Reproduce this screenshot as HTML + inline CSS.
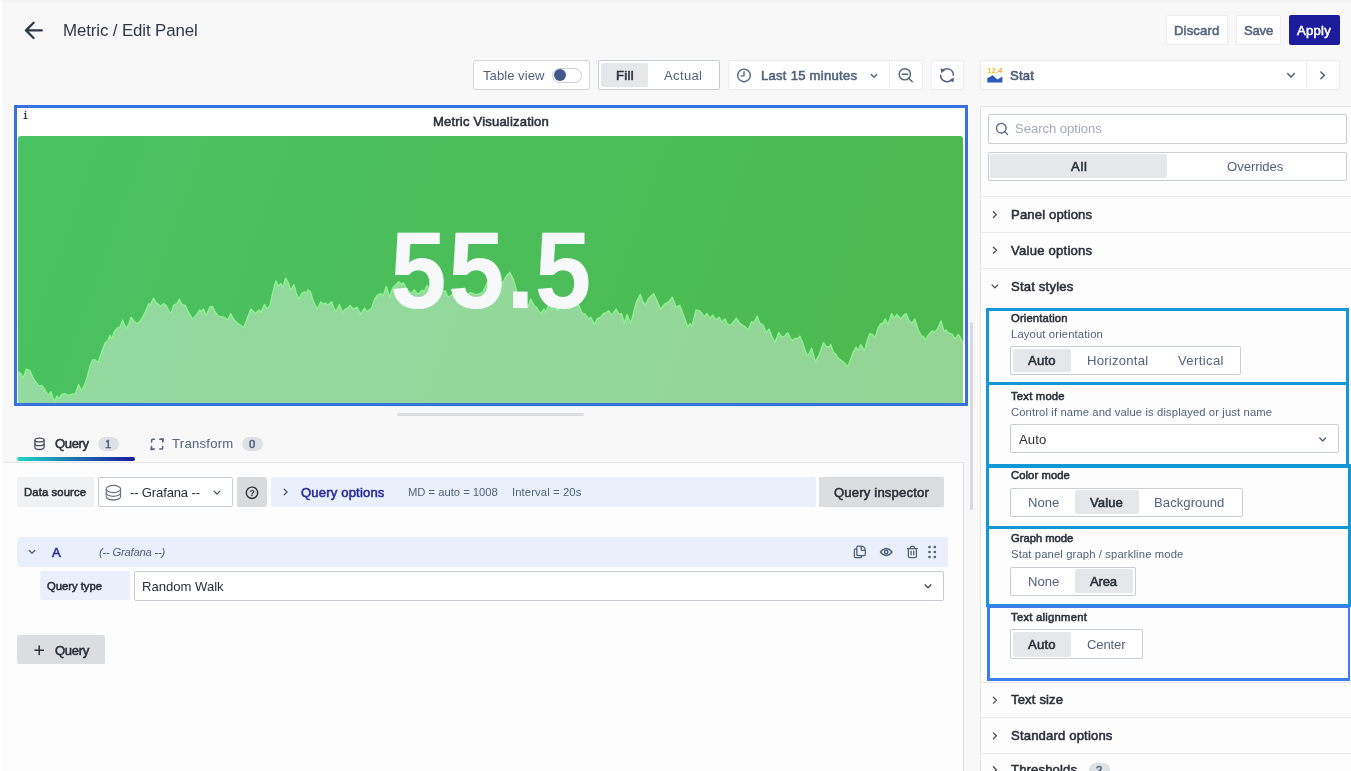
<!DOCTYPE html>
<html lang="en"><head><meta charset="utf-8"><title>Metric / Edit Panel</title>
<style>

html,body{margin:0;padding:0;}
body{width:1351px;height:771px;overflow:hidden;position:relative;background:#f8f8f8;font-family:"Liberation Sans",sans-serif;}
.b{position:absolute;box-sizing:border-box;}
.t{position:absolute;white-space:nowrap;will-change:transform;line-height:20px;height:20px;font-family:"Liberation Sans",sans-serif;}
svg{position:absolute;left:0;top:0;overflow:visible;}

</style></head><body>
<div class="b" style="left:0px;top:0px;width:1351.00px;height:1.50px;background:#f3f3f4;"></div>
<div class="b" style="left:0px;top:0px;width:1.60px;height:771.00px;background:#ffffff;"></div>
<div class="b" style="left:2px;top:461.5px;width:962.00px;height:318.50px;background:#fdfdfd;border-top:1px solid #e4e6ea;border-right:1px solid #e4e6ea;"></div>
<div class="b" style="left:979.5px;top:105.5px;width:380.50px;height:674.50px;background:#fdfdfd;border:1px solid #e4e6ea;border-radius:2px;"></div>
<div class="b" style="left:1166px;top:15px;width:62.00px;height:30.00px;background:#ffffff;border:1px solid #eceef1;border-radius:2px;"></div>
<div class="b" style="left:1236px;top:15px;width:45.00px;height:30.00px;background:#ffffff;border:1px solid #eceef1;border-radius:2px;"></div>
<div class="b" style="left:1289px;top:15px;width:51.00px;height:30.00px;background:#1c1c9c;border-radius:2px;"></div>
<div class="b" style="left:473px;top:60px;width:117.00px;height:30.00px;background:#ffffff;border:1px solid #d2d6dc;border-radius:2px;"></div>
<div class="b" style="left:552px;top:68px;width:30.00px;height:15.00px;background:#ffffff;border:1px solid #c8ccd3;border-radius:8px;"></div>
<div class="b" style="left:554.4px;top:69.4px;width:12.00px;height:12.00px;background:#40588a;border-radius:6px;"></div>
<div class="b" style="left:598px;top:60px;width:122.00px;height:30.00px;background:#ffffff;border:1px solid #c8ccd3;border-radius:2px;"></div>
<div class="b" style="left:600.6px;top:63px;width:47.80px;height:24.40px;background:#e6e7ea;border-radius:2px;"></div>
<div class="b" style="left:727.5px;top:60px;width:195.00px;height:30.00px;background:#ffffff;border:1px solid #e9ebee;border-radius:2px;"></div>
<div class="b" style="left:889px;top:60px;width:1.00px;height:30.00px;background:#e9ebee;"></div>
<div class="b" style="left:930.5px;top:60px;width:33.00px;height:30.00px;background:#ffffff;border:1px solid #e9ebee;border-radius:2px;"></div>
<div class="b" style="left:979.5px;top:60px;width:360.00px;height:30.00px;background:#ffffff;border:1px solid #e9ebee;border-radius:2px;"></div>
<div class="b" style="left:1306px;top:60px;width:1.00px;height:30.00px;background:#e9ebee;"></div>
<div class="b" style="left:14px;top:105px;width:954.00px;height:301.00px;background:#ffffff;border:3px solid #3871dc;"></div>
<div class="b" style="left:397px;top:413px;width:187.00px;height:3.00px;background:#dcdde0;border-radius:1.5px;"></div>
<div class="b" style="left:970px;top:322px;width:3.00px;height:188.00px;background:#d9dadd;border-radius:1.5px;"></div>
<div class="b" style="left:17px;top:457px;width:117.50px;height:4.00px;background:linear-gradient(90deg,#1fd6c4 0%,#1d6fb0 50%,#1a1a9a 100%);border-radius:2px;"></div>
<div class="b" style="left:98px;top:436.6px;width:21.40px;height:14.40px;background:#dde0e5;border-radius:8px;"></div>
<div class="b" style="left:242px;top:436.6px;width:21.00px;height:14.40px;background:#dde0e5;border-radius:8px;"></div>
<div class="b" style="left:17px;top:477px;width:77.00px;height:29.60px;background:#f0f1f3;border-radius:2px;"></div>
<div class="b" style="left:98px;top:476.5px;width:135.00px;height:30.00px;background:#ffffff;border:1px solid #c8ccd3;border-radius:2px;"></div>
<div class="b" style="left:237.4px;top:477px;width:29.20px;height:29.60px;background:#d9dadd;border-radius:2px;"></div>
<div class="b" style="left:271px;top:477px;width:544.50px;height:29.60px;background:#e9effb;border-radius:2px;"></div>
<div class="b" style="left:819.3px;top:477px;width:125.00px;height:29.70px;background:#dcdde0;border-radius:2px;"></div>
<div class="b" style="left:17px;top:537.2px;width:931.00px;height:29.60px;background:#e9effb;border-radius:2px;"></div>
<div class="b" style="left:39.8px;top:571.3px;width:89.90px;height:29.00px;background:#e9effb;border-radius:2px;"></div>
<div class="b" style="left:133.8px;top:571.3px;width:810.20px;height:29.30px;background:#ffffff;border:1px solid #c8ccd3;border-radius:2px;"></div>
<div class="b" style="left:17px;top:635.2px;width:88.40px;height:29.00px;background:#dcdde0;border-radius:2px;"></div>
<div class="b" style="left:987.5px;top:114px;width:359.00px;height:29.50px;background:#ffffff;border:1px solid #c8ccd3;border-radius:2px;"></div>
<div class="b" style="left:987.5px;top:151.7px;width:359.00px;height:29.30px;background:#ffffff;border:1px solid #c8ccd3;border-radius:2px;"></div>
<div class="b" style="left:990px;top:154.2px;width:176.50px;height:24.30px;background:#e6e7ea;border-radius:2px;"></div>
<div class="b" style="left:980.5px;top:195.9px;width:370.50px;height:1.00px;background:#e9eaed;"></div>
<div class="b" style="left:980.5px;top:232.0px;width:370.50px;height:1.00px;background:#e9eaed;"></div>
<div class="b" style="left:980.5px;top:267.6px;width:370.50px;height:1.00px;background:#e9eaed;"></div>
<div class="b" style="left:980.5px;top:682.4px;width:370.50px;height:1.00px;background:#e9eaed;"></div>
<div class="b" style="left:980.5px;top:717.1px;width:370.50px;height:1.00px;background:#e9eaed;"></div>
<div class="b" style="left:980.5px;top:752.7px;width:370.50px;height:1.00px;background:#e9eaed;"></div>
<div class="b" style="left:1010px;top:346px;width:231.00px;height:29.00px;background:#ffffff;border:1px solid #c8ccd3;border-radius:2px;"></div>
<div class="b" style="left:1013px;top:348.6px;width:58.00px;height:23.40px;background:#e6e7ea;border-radius:2px;"></div>
<div class="b" style="left:1010px;top:424.3px;width:328.60px;height:29.00px;background:#ffffff;border:1px solid #c8ccd3;border-radius:2px;"></div>
<div class="b" style="left:1010px;top:487.7px;width:233.00px;height:29.00px;background:#ffffff;border:1px solid #c8ccd3;border-radius:2px;"></div>
<div class="b" style="left:1075.2px;top:490.3px;width:63.40px;height:23.70px;background:#e6e7ea;border-radius:2px;"></div>
<div class="b" style="left:1010px;top:566.7px;width:125.70px;height:29.00px;background:#ffffff;border:1px solid #c8ccd3;border-radius:2px;"></div>
<div class="b" style="left:1075.2px;top:569.3px;width:57.60px;height:23.70px;background:#e6e7ea;border-radius:2px;"></div>
<div class="b" style="left:1010px;top:629.3px;width:133.00px;height:30.00px;background:#ffffff;border:1px solid #c8ccd3;border-radius:2px;"></div>
<div class="b" style="left:1012.6px;top:631.6px;width:58.40px;height:25.20px;background:#e6e7ea;border-radius:2px;"></div>
<div class="b" style="left:1088.5px;top:762.7px;width:21.50px;height:14.30px;background:#dde0e5;border-radius:8px;"></div>
<div class="b" style="left:986px;top:308px;width:363.00px;height:77.00px;background:transparent;border:3px solid #1198d5;"></div>
<div class="b" style="left:986px;top:382px;width:363.00px;height:85.50px;background:transparent;border:3px solid #1198d5;"></div>
<div class="b" style="left:986px;top:464.3px;width:364.50px;height:65.20px;background:transparent;border:3.3px solid #1198d5;"></div>
<div class="b" style="left:986px;top:526px;width:364.50px;height:81.00px;background:transparent;border:3.3px solid #1198d5;"></div>
<div class="b" style="left:987px;top:604.5px;width:362.70px;height:76.30px;background:transparent;border-style:solid;border-color:#3b7ded;border-width:3px 2px 3px 3px;"></div>
<div class="b" style="left:18px;top:136px;width:945px;height:267px;border-radius:3px 3px 0 0;overflow:hidden;background:linear-gradient(110deg,#4ac263 0%,#4db94f 100%);">
<svg width="945" height="267" viewBox="0 0 945 267"><path d="M0.0,235.7 L2.9,237.5 L5.1,242.0 L8.3,233.0 L12.0,234.8 L15.6,243.0 L21.0,250.2 L23.8,249.3 L27.4,254.7 L30.1,259.3 L32.9,255.6 L36.5,265.6 L38.8,260.2 L40.7,262.9 L43.7,258.4 L46.5,257.5 L50.1,259.3 L53.7,258.4 L57.4,257.5 L60.6,248.4 L63.2,254.7 L66.1,250.2 L69.2,241.1 L71.9,230.2 L74.6,223.9 L77.3,223.9 L80.1,226.6 L83.7,215.7 L87.3,206.6 L90.0,203.9 L91.9,199.4 L93.7,203.0 L96.4,195.7 L99.1,192.1 L101.8,191.2 L104.6,183.9 L108.2,193.0 L110.9,187.6 L113.3,181.2 L116.4,185.7 L120.0,187.6 L123.6,183.0 L127.3,175.8 L130.9,167.6 L132.7,168.5 L135.4,162.1 L138.2,166.7 L142.7,170.3 L145.4,167.6 L148.1,169.4 L150.9,174.8 L153.2,177.6 L155.4,169.4 L159.0,167.6 L161.4,163.0 L163.6,168.5 L167.2,169.4 L170.8,176.7 L174.5,183.0 L178.1,179.4 L181.7,173.9 L183.5,175.8 L185.4,173.0 L188.4,179.4 L191.7,171.2 L194.4,170.3 L197.2,175.8 L200.8,180.3 L206.2,181.2 L209.9,183.9 L212.6,177.6 L216.2,183.9 L220.8,188.5 L222.0,188.4 L225.6,192.0 L229.3,182.0 L232.9,173.0 L237.4,177.5 L241.0,173.9 L242.9,176.6 L246.5,168.4 L249.2,173.0 L252.0,169.4 L254.7,156.6 L257.9,144.8 L260.5,150.3 L262.8,147.6 L264.7,151.2 L267.7,142.1 L270.6,147.6 L272.8,153.9 L275.9,148.5 L278.3,157.5 L281.0,163.0 L283.7,157.5 L286.4,155.7 L288.3,157.5 L290.1,153.9 L292.4,155.7 L294.6,163.0 L297.3,169.4 L299.2,173.0 L302.8,165.7 L305.5,168.4 L307.3,166.6 L309.5,169.4 L313.7,165.7 L315.5,171.2 L317.9,175.7 L321.5,168.4 L324.6,176.6 L327.3,173.0 L330.0,172.1 L331.8,169.4 L335.5,173.0 L339.1,171.2 L342.7,178.4 L346.4,172.1 L349.1,175.7 L353.6,172.1 L356.3,163.9 L359.1,159.4 L362.7,157.6 L365.4,159.4 L368.2,150.3 L371.8,161.2 L374.5,152.1 L378.1,148.5 L380.9,145.8 L383.6,148.5 L385.4,146.7 L388.1,152.1 L392.7,157.6 L396.3,153.9 L399.9,158.5 L404.5,153.9 L406.3,155.7 L409.0,149.4 L411.7,153.9 L415.0,157.0 L418.0,153.0 L421.0,158.0 L424.0,155.0 L427.2,154.8 L429.9,161.2 L434.4,158.5 L439.9,156.6 L443.0,159.0 L446.0,155.0 L449.0,158.0 L452.6,156.6 L458.0,158.5 L459.3,158.4 L464.7,156.6 L469.2,146.6 L472.0,150.0 L475.0,147.0 L478.0,152.0 L482.9,149.4 L488.3,140.3 L491.9,136.3 L495.6,143.9 L499.2,156.6 L502.0,160.0 L506.5,167.5 L510.1,170.2 L512.8,163.0 L516.5,170.2 L518.3,171.1 L522.8,177.5 L526.1,173.0 L527.9,176.6 L531.0,167.5 L534.6,173.0 L539.1,173.9 L542.8,171.1 L546.0,174.0 L549.0,170.0 L552.0,173.0 L556.0,168.0 L560.9,169.3 L563.7,176.6 L567.3,178.4 L570.9,182.9 L572.7,181.1 L576.4,188.4 L579.1,182.9 L582.7,181.1 L585.4,177.5 L588.2,176.6 L590.9,174.8 L593.6,179.3 L598.2,173.0 L600.9,178.4 L603.6,177.5 L606.3,187.5 L609.0,178.4 L612.7,187.5 L615.4,177.5 L618.1,166.6 L622.3,158.4 L624.5,164.8 L627.2,169.3 L630.8,162.1 L635.7,157.5 L639.0,164.8 L642.6,173.0 L646.3,168.4 L650.8,165.7 L654.4,161.2 L658.1,171.1 L661.7,169.3 L665.3,178.4 L669.9,191.1 L672.0,187.5 L673.9,190.2 L678.0,173.9 L681.7,174.8 L686.2,180.2 L688.9,177.5 L692.0,182.0 L695.0,179.0 L698.0,184.0 L701.0,181.0 L704.0,186.0 L707.0,183.0 L709.5,188.0 L712.0,189.4 L714.7,186.7 L718.4,182.1 L722.0,187.6 L726.5,190.3 L730.2,193.9 L733.4,185.7 L735.6,186.7 L739.2,180.3 L742.0,187.6 L744.7,188.5 L748.3,196.6 L751.0,193.0 L753.8,200.3 L757.0,206.6 L760.7,196.6 L763.7,201.2 L766.5,200.3 L769.7,196.6 L772.8,203.0 L774.6,204.8 L777.4,202.1 L779.2,203.0 L781.9,200.3 L784.6,206.6 L787.3,214.8 L789.7,220.2 L793.7,212.1 L797.3,225.7 L801.0,219.3 L805.5,206.6 L808.2,210.3 L810.9,211.2 L812.8,208.4 L815.5,216.6 L817.3,217.5 L820.0,222.1 L823.7,224.8 L827.3,227.5 L829.6,231.1 L832.7,223.0 L835.5,215.7 L838.2,211.2 L840.0,214.8 L842.7,208.4 L846.4,214.8 L849.1,204.8 L851.8,197.5 L854.5,198.4 L856.9,202.1 L860.0,192.1 L862.7,187.6 L864.5,187.6 L867.2,183.0 L870.0,188.5 L873.6,177.6 L876.3,182.1 L879.0,178.5 L882.7,183.0 L885.4,179.4 L888.1,177.6 L890.8,183.9 L893.6,187.6 L896.8,183.0 L899.9,193.0 L903.5,200.3 L905.4,200.3 L907.2,203.9 L910.8,198.4 L914.4,194.8 L916.2,196.6 L919.9,192.1 L923.0,184.8 L926.2,195.7 L928.0,193.9 L929.9,196.6 L934.4,198.4 L937.1,203.0 L940.4,198.4 L942.6,202.1 L945.0,207.5 L945,267 L0,267 Z" fill="rgba(255,255,255,0.4)" stroke="none"/><path d="M0.0,235.7 L2.9,237.5 L5.1,242.0 L8.3,233.0 L12.0,234.8 L15.6,243.0 L21.0,250.2 L23.8,249.3 L27.4,254.7 L30.1,259.3 L32.9,255.6 L36.5,265.6 L38.8,260.2 L40.7,262.9 L43.7,258.4 L46.5,257.5 L50.1,259.3 L53.7,258.4 L57.4,257.5 L60.6,248.4 L63.2,254.7 L66.1,250.2 L69.2,241.1 L71.9,230.2 L74.6,223.9 L77.3,223.9 L80.1,226.6 L83.7,215.7 L87.3,206.6 L90.0,203.9 L91.9,199.4 L93.7,203.0 L96.4,195.7 L99.1,192.1 L101.8,191.2 L104.6,183.9 L108.2,193.0 L110.9,187.6 L113.3,181.2 L116.4,185.7 L120.0,187.6 L123.6,183.0 L127.3,175.8 L130.9,167.6 L132.7,168.5 L135.4,162.1 L138.2,166.7 L142.7,170.3 L145.4,167.6 L148.1,169.4 L150.9,174.8 L153.2,177.6 L155.4,169.4 L159.0,167.6 L161.4,163.0 L163.6,168.5 L167.2,169.4 L170.8,176.7 L174.5,183.0 L178.1,179.4 L181.7,173.9 L183.5,175.8 L185.4,173.0 L188.4,179.4 L191.7,171.2 L194.4,170.3 L197.2,175.8 L200.8,180.3 L206.2,181.2 L209.9,183.9 L212.6,177.6 L216.2,183.9 L220.8,188.5 L222.0,188.4 L225.6,192.0 L229.3,182.0 L232.9,173.0 L237.4,177.5 L241.0,173.9 L242.9,176.6 L246.5,168.4 L249.2,173.0 L252.0,169.4 L254.7,156.6 L257.9,144.8 L260.5,150.3 L262.8,147.6 L264.7,151.2 L267.7,142.1 L270.6,147.6 L272.8,153.9 L275.9,148.5 L278.3,157.5 L281.0,163.0 L283.7,157.5 L286.4,155.7 L288.3,157.5 L290.1,153.9 L292.4,155.7 L294.6,163.0 L297.3,169.4 L299.2,173.0 L302.8,165.7 L305.5,168.4 L307.3,166.6 L309.5,169.4 L313.7,165.7 L315.5,171.2 L317.9,175.7 L321.5,168.4 L324.6,176.6 L327.3,173.0 L330.0,172.1 L331.8,169.4 L335.5,173.0 L339.1,171.2 L342.7,178.4 L346.4,172.1 L349.1,175.7 L353.6,172.1 L356.3,163.9 L359.1,159.4 L362.7,157.6 L365.4,159.4 L368.2,150.3 L371.8,161.2 L374.5,152.1 L378.1,148.5 L380.9,145.8 L383.6,148.5 L385.4,146.7 L388.1,152.1 L392.7,157.6 L396.3,153.9 L399.9,158.5 L404.5,153.9 L406.3,155.7 L409.0,149.4 L411.7,153.9 L415.0,157.0 L418.0,153.0 L421.0,158.0 L424.0,155.0 L427.2,154.8 L429.9,161.2 L434.4,158.5 L439.9,156.6 L443.0,159.0 L446.0,155.0 L449.0,158.0 L452.6,156.6 L458.0,158.5 L459.3,158.4 L464.7,156.6 L469.2,146.6 L472.0,150.0 L475.0,147.0 L478.0,152.0 L482.9,149.4 L488.3,140.3 L491.9,136.3 L495.6,143.9 L499.2,156.6 L502.0,160.0 L506.5,167.5 L510.1,170.2 L512.8,163.0 L516.5,170.2 L518.3,171.1 L522.8,177.5 L526.1,173.0 L527.9,176.6 L531.0,167.5 L534.6,173.0 L539.1,173.9 L542.8,171.1 L546.0,174.0 L549.0,170.0 L552.0,173.0 L556.0,168.0 L560.9,169.3 L563.7,176.6 L567.3,178.4 L570.9,182.9 L572.7,181.1 L576.4,188.4 L579.1,182.9 L582.7,181.1 L585.4,177.5 L588.2,176.6 L590.9,174.8 L593.6,179.3 L598.2,173.0 L600.9,178.4 L603.6,177.5 L606.3,187.5 L609.0,178.4 L612.7,187.5 L615.4,177.5 L618.1,166.6 L622.3,158.4 L624.5,164.8 L627.2,169.3 L630.8,162.1 L635.7,157.5 L639.0,164.8 L642.6,173.0 L646.3,168.4 L650.8,165.7 L654.4,161.2 L658.1,171.1 L661.7,169.3 L665.3,178.4 L669.9,191.1 L672.0,187.5 L673.9,190.2 L678.0,173.9 L681.7,174.8 L686.2,180.2 L688.9,177.5 L692.0,182.0 L695.0,179.0 L698.0,184.0 L701.0,181.0 L704.0,186.0 L707.0,183.0 L709.5,188.0 L712.0,189.4 L714.7,186.7 L718.4,182.1 L722.0,187.6 L726.5,190.3 L730.2,193.9 L733.4,185.7 L735.6,186.7 L739.2,180.3 L742.0,187.6 L744.7,188.5 L748.3,196.6 L751.0,193.0 L753.8,200.3 L757.0,206.6 L760.7,196.6 L763.7,201.2 L766.5,200.3 L769.7,196.6 L772.8,203.0 L774.6,204.8 L777.4,202.1 L779.2,203.0 L781.9,200.3 L784.6,206.6 L787.3,214.8 L789.7,220.2 L793.7,212.1 L797.3,225.7 L801.0,219.3 L805.5,206.6 L808.2,210.3 L810.9,211.2 L812.8,208.4 L815.5,216.6 L817.3,217.5 L820.0,222.1 L823.7,224.8 L827.3,227.5 L829.6,231.1 L832.7,223.0 L835.5,215.7 L838.2,211.2 L840.0,214.8 L842.7,208.4 L846.4,214.8 L849.1,204.8 L851.8,197.5 L854.5,198.4 L856.9,202.1 L860.0,192.1 L862.7,187.6 L864.5,187.6 L867.2,183.0 L870.0,188.5 L873.6,177.6 L876.3,182.1 L879.0,178.5 L882.7,183.0 L885.4,179.4 L888.1,177.6 L890.8,183.9 L893.6,187.6 L896.8,183.0 L899.9,193.0 L903.5,200.3 L905.4,200.3 L907.2,203.9 L910.8,198.4 L914.4,194.8 L916.2,196.6 L919.9,192.1 L923.0,184.8 L926.2,195.7 L928.0,193.9 L929.9,196.6 L934.4,198.4 L937.1,203.0 L940.4,198.4 L942.6,202.1 L945.0,207.5" fill="none" stroke="#8ff391" stroke-width="1.3" stroke-linejoin="round"/></svg>
</div>
<span id="bv" class="b" style="left:390.2px;top:207.6px;font-size:109.5px;line-height:124px;font-weight:700;color:#f7f8fa;white-space:nowrap;letter-spacing:1.57px;transform:scaleX(0.93);transform-origin:0 0;">55<span style="letter-spacing:0.4px">.</span>5</span>
<span class="t" style="left:23.3px;top:105.5px;font-family:'Liberation Mono',monospace;font-weight:700;font-size:11px;color:#2a303a;transform:scaleX(0.72);transform-origin:0 0;">i</span>

<svg width="1351" height="771" viewBox="0 0 1351 771"><path d="M41.8,30.4 H26.6 M33.6,22.8 L26,30.4 L33.6,38" fill="none" stroke="#2f3849" stroke-width="2.3" stroke-linecap="round" stroke-linejoin="round"/>
<circle cx="744" cy="75.4" r="6.3" fill="none" stroke="#52637c" stroke-width="1.4"/><path d="M744,71.6 V75.9 H741.2" fill="none" stroke="#52637c" stroke-width="1.3" stroke-linecap="round" stroke-linejoin="round"/>
<path d="M871.3,74.39999999999999 L874,77.2 L876.7,74.39999999999999" fill="none" stroke="#52637c" stroke-width="1.4" stroke-linecap="round" stroke-linejoin="round"/>
<circle cx="904.8" cy="74.3" r="5.6" fill="none" stroke="#52637c" stroke-width="1.4"/><path d="M902.2,74.3 H907.6 M909,78.6 L912.3,81.7" fill="none" stroke="#52637c" stroke-width="1.4" stroke-linecap="round"/>
<g fill="none" stroke="#52637c" stroke-width="1.5" stroke-linecap="round"><path d="M942,71.2 A6.4,6.4 0 0 1 953.4,75.2"/><path d="M940.6,75.2 A6.4,6.4 0 0 0 952,79.2"/></g><path d="M940.6,68.2 L945.3,70 L941.2,73.2 Z M953.9,77.4 L953.6,82.3 L949.3,80.4 Z" fill="#52637c"/>
<defs><linearGradient id="sg" x1="0" x2="1" y1="0" y2="0"><stop offset="0" stop-color="#f2cc0c"/><stop offset="1" stop-color="#f29a3a"/></linearGradient></defs>
<text x="987.2" y="73.3" font-family="Liberation Sans, sans-serif" font-size="7.6" font-weight="700" fill="url(#sg)" textLength="15" lengthAdjust="spacingAndGlyphs">12.4</text>
<path d="M987.3,82.5 V78.2 L992.7,75.2 L997.3,79.5 L1002.4,76.6 V82.5 Z" fill="#2f59b8"/>
<path d="M1287.6,73.5 L1291,77.1 L1294.4,73.5" fill="none" stroke="#52637c" stroke-width="1.5" stroke-linecap="round" stroke-linejoin="round"/>
<path d="M1320.8,72.0 L1324.3999999999999,75.4 L1320.8,78.80000000000001" fill="none" stroke="#52637c" stroke-width="1.5" stroke-linecap="round" stroke-linejoin="round"/>
<circle cx="1001.3" cy="128.2" r="4.8" fill="none" stroke="#52637c" stroke-width="1.3"/><path d="M1004.8,131.8 L1007.6,134.6" stroke="#52637c" stroke-width="1.3" stroke-linecap="round"/>
<path d="M993.4,211.7 L996.4,214.6 L993.4,217.5" fill="none" stroke="#464e5c" stroke-width="1.3" stroke-linecap="round" stroke-linejoin="round"/>
<path d="M993.4,247.29999999999998 L996.4,250.2 L993.4,253.1" fill="none" stroke="#464e5c" stroke-width="1.3" stroke-linecap="round" stroke-linejoin="round"/>
<path d="M993.4,697.3000000000001 L996.4,700.2 L993.4,703.1" fill="none" stroke="#464e5c" stroke-width="1.3" stroke-linecap="round" stroke-linejoin="round"/>
<path d="M993.4,732.9 L996.4,735.8 L993.4,738.6999999999999" fill="none" stroke="#464e5c" stroke-width="1.3" stroke-linecap="round" stroke-linejoin="round"/>
<path d="M993.4,766.8000000000001 L996.4,769.7 L993.4,772.6" fill="none" stroke="#464e5c" stroke-width="1.3" stroke-linecap="round" stroke-linejoin="round"/>
<path d="M992.0,284.9 L994.9,287.9 L997.8,284.9" fill="none" stroke="#464e5c" stroke-width="1.3" stroke-linecap="round" stroke-linejoin="round"/>
<path d="M1319.8,438.1 L1322.7,441.1 L1325.6000000000001,438.1" fill="none" stroke="#52637c" stroke-width="1.4" stroke-linecap="round" stroke-linejoin="round"/>
<g fill="none" stroke="#464e5c" stroke-width="1.3"><ellipse cx="39.5" cy="440.0" rx="4.6" ry="1.9"/><path d="M34.9,440.0 V447.6 A4.6,1.9 0 0 0 44.1,447.6 V440.0"/><path d="M34.9,443.8 A4.6,1.9 0 0 0 44.1,443.8"/></g>
<g fill="none" stroke="#52637c" stroke-width="1.5" stroke-linecap="round" stroke-linejoin="round"><path d="M151.6,442 V440.4 Q151.6,439.3 152.7,439.3 H154.4 M159.8,439.3 H161.6 Q162.7,439.3 162.7,440.4 V442 M162.7,446.4 V448 Q162.7,449.1 161.6,449.1 H159.8 M154.4,449.1 H152.7 Q151.6,449.1 151.6,448 V446.4"/></g><path d="M160.6,438.2 L163.8,438.2 L163.8,441.4 Z M153.6,450.2 L150.4,450.2 L150.4,447 Z" fill="#52637c"/>
<g fill="none" stroke="#6a707b" stroke-width="1.1"><ellipse cx="113.4" cy="489" rx="7.2" ry="3.6"/><path d="M106.2,489 V496.4 A7.2,3.6 0 0 0 120.6,496.4 V489"/><path d="M106.2,492.8 A7.2,3.6 0 0 0 120.6,492.8"/><path d="M107.4,498.6 A7.2,3.0 0 0 0 119.4,498.6" stroke-width="0.9"/></g>
<path d="M214.1,491.1 L217,494.1 L219.9,491.1" fill="none" stroke="#464e5c" stroke-width="1.3" stroke-linecap="round" stroke-linejoin="round"/>
<circle cx="252" cy="492.8" r="5.7" fill="none" stroke="#2a303a" stroke-width="1.4"/><text x="252" y="496" text-anchor="middle" font-family="Liberation Sans, sans-serif" font-size="8.6" font-weight="700" fill="#2a303a">?</text>
<path d="M284.1,489.1 L287.1,492 L284.1,494.9" fill="none" stroke="#464e5c" stroke-width="1.3" stroke-linecap="round" stroke-linejoin="round"/>
<path d="M29.3,550.5 L32,553.3 L34.7,550.5" fill="none" stroke="#52637c" stroke-width="1.3" stroke-linecap="round" stroke-linejoin="round"/>
<g fill="none" stroke="#52637c" stroke-width="1.3" stroke-linejoin="round" stroke-linecap="round"><path d="M856.4,548.8 H855.4 Q854.4,548.8 854.4,549.8 V556.6 Q854.4,557.6 855.4,557.6 H860.6 Q861.6,557.6 861.6,556.6 V556"/><path d="M857.8,546.2 H861.2 Q865.2,546.6 865.3,550.6 V554.6 Q865.3,555.6 864.3,555.6 H857.8 Q856.8,555.6 856.8,554.6 V547.2 Q856.8,546.2 857.8,546.2 Z M861.2,546.6 V549.6 Q861.2,550.4 862,550.4 H865"/></g>
<g fill="none" stroke="#52637c" stroke-width="1.3"><path d="M880.5,552 Q886.2,545 892,552 Q886.2,559 880.5,552 Z"/><circle cx="886.2" cy="552" r="1.7" stroke-width="1.5"/></g>
<g fill="none" stroke="#52637c" stroke-width="1.3" stroke-linecap="round" stroke-linejoin="round"><path d="M907.4,548.6 H917.4 M910.4,548.4 V547.4 Q910.4,546.4 911.4,546.4 H913.4 Q914.4,546.4 914.4,547.4 V548.4 M908.4,548.8 V556.2 Q908.4,557.6 909.8,557.6 H915 Q916.4,557.6 916.4,556.2 V548.8 M911.1,551.2 V554.8 M913.7,551.2 V554.8"/></g>
<circle cx="929.5" cy="547" r="1.35" fill="#52637c"/>
<circle cx="929.5" cy="552" r="1.35" fill="#52637c"/>
<circle cx="929.5" cy="557" r="1.35" fill="#52637c"/>
<circle cx="934.8" cy="547" r="1.35" fill="#52637c"/>
<circle cx="934.8" cy="552" r="1.35" fill="#52637c"/>
<circle cx="934.8" cy="557" r="1.35" fill="#52637c"/>
<path d="M925.1,584.8 L928,587.8 L930.9,584.8" fill="none" stroke="#464e5c" stroke-width="1.3" stroke-linecap="round" stroke-linejoin="round"/>
<path d="M34.4,650.3 H44 M39.2,645.5 V655.1" stroke="#2a303a" stroke-width="1.5" stroke-linecap="butt"/></svg>
<span class="t" style="left:62.70px;top:21px;font-size:16.9px;font-weight:400;color:#2f3849;letter-spacing:-0.131px;">Metric / Edit Panel</span>
<span class="t" style="left:1174.30px;top:21px;font-size:13.1px;font-weight:400;-webkit-text-stroke:0.55px;color:#52637c;letter-spacing:0.152px;">Discard</span>
<span class="t" style="left:1244.00px;top:21px;font-size:13.1px;font-weight:400;-webkit-text-stroke:0.55px;color:#52637c;letter-spacing:-0.220px;">Save</span>
<span class="t" style="left:1297.30px;top:21px;font-size:13.1px;font-weight:400;-webkit-text-stroke:0.55px;color:#ffffff;letter-spacing:0.234px;">Apply</span>
<span class="t" style="left:482.60px;top:66px;font-size:13.1px;font-weight:400;color:#52637c;letter-spacing:0.029px;">Table view</span>
<span class="t" style="left:616.00px;top:66px;font-size:13.1px;font-weight:400;-webkit-text-stroke:0.55px;color:#2a303a;letter-spacing:0.289px;">Fill</span>
<span class="t" style="left:664.00px;top:66px;font-size:13.1px;font-weight:400;color:#52637c;letter-spacing:0.319px;">Actual</span>
<span class="t" style="left:760.60px;top:66px;font-size:13.1px;font-weight:400;-webkit-text-stroke:0.55px;color:#52637c;letter-spacing:0.254px;">Last 15 minutes</span>
<span class="t" style="left:1010.30px;top:66px;font-size:13.1px;font-weight:400;-webkit-text-stroke:0.55px;color:#4a5a73;letter-spacing:0.201px;">Stat</span>
<span class="t" style="left:1015.10px;top:119px;font-size:13.1px;font-weight:400;color:#a3abb7;letter-spacing:-0.043px;">Search options</span>
<span class="t" style="left:1070.80px;top:157px;font-size:13.1px;font-weight:400;-webkit-text-stroke:0.55px;color:#2a303a;letter-spacing:0.669px;">All</span>
<span class="t" style="left:1226.90px;top:157px;font-size:13.1px;font-weight:400;color:#52637c;letter-spacing:-0.046px;">Overrides</span>
<span class="t" style="left:432.80px;top:112px;font-size:13.1px;font-weight:400;-webkit-text-stroke:0.55px;color:#2a303a;letter-spacing:0.170px;">Metric Visualization</span>
<span class="t" style="left:55.00px;top:434px;font-size:13.1px;font-weight:400;-webkit-text-stroke:0.55px;color:#2a303a;letter-spacing:-0.414px;">Query</span>
<span class="t" style="left:105.47px;top:434px;font-size:11.25px;font-weight:400;-webkit-text-stroke:0.55px;color:#52637c;letter-spacing:0.000px;">1</span>
<span class="t" style="left:172.40px;top:434px;font-size:13.1px;font-weight:400;color:#52637c;letter-spacing:0.254px;">Transform</span>
<span class="t" style="left:249.37px;top:434px;font-size:11.25px;font-weight:400;-webkit-text-stroke:0.55px;color:#52637c;letter-spacing:0.000px;">0</span>
<span class="t" style="left:24.40px;top:482px;font-size:11.25px;font-weight:400;-webkit-text-stroke:0.55px;color:#2a303a;letter-spacing:0.134px;">Data source</span>
<span class="t" style="left:130.00px;top:483px;font-size:13.1px;font-weight:400;color:#2a303a;letter-spacing:-0.169px;">-- Grafana --</span>
<span class="t" style="left:300.60px;top:483px;font-size:13.1px;font-weight:400;-webkit-text-stroke:0.55px;color:#2a2aa0;letter-spacing:0.156px;">Query options</span>
<span class="t" style="left:407.60px;top:482px;font-size:11.25px;font-weight:400;color:#52637c;letter-spacing:-0.018px;">MD = auto = 1008</span>
<span class="t" style="left:512.40px;top:482px;font-size:11.25px;font-weight:400;color:#52637c;letter-spacing:0.111px;">Interval = 20s</span>
<span class="t" style="left:834.30px;top:483px;font-size:13.1px;font-weight:400;-webkit-text-stroke:0.55px;color:#2a303a;letter-spacing:0.169px;">Query inspector</span>
<span class="t" style="left:51.88px;top:543px;font-size:13.1px;font-weight:400;-webkit-text-stroke:0.55px;color:#2a2aa0;letter-spacing:0.000px;">A</span>
<span class="t" style="left:99.20px;top:542px;font-size:11.25px;font-weight:400;color:#52637c;letter-spacing:-0.228px;font-style:italic;">(-- Grafana --)</span>
<span class="t" style="left:47.30px;top:576px;font-size:11.25px;font-weight:400;-webkit-text-stroke:0.55px;color:#2a303a;letter-spacing:-0.003px;">Query type</span>
<span class="t" style="left:142.10px;top:577px;font-size:13.1px;font-weight:400;color:#2a303a;letter-spacing:-0.015px;">Random Walk</span>
<span class="t" style="left:55.00px;top:641px;font-size:13.1px;font-weight:400;-webkit-text-stroke:0.55px;color:#2a303a;letter-spacing:-0.364px;">Query</span>
<span class="t" style="left:1010.60px;top:205px;font-size:13.1px;font-weight:400;-webkit-text-stroke:0.55px;color:#2a303a;letter-spacing:0.145px;">Panel options</span>
<span class="t" style="left:1010.60px;top:241px;font-size:13.1px;font-weight:400;-webkit-text-stroke:0.55px;color:#2a303a;letter-spacing:0.226px;">Value options</span>
<span class="t" style="left:1010.60px;top:277px;font-size:13.1px;font-weight:400;-webkit-text-stroke:0.55px;color:#2a303a;letter-spacing:0.189px;">Stat styles</span>
<span class="t" style="left:1010.60px;top:308px;font-size:11.25px;font-weight:400;-webkit-text-stroke:0.55px;color:#2a303a;letter-spacing:0.147px;">Orientation</span>
<span class="t" style="left:1010.60px;top:324px;font-size:11.25px;font-weight:400;color:#52637c;letter-spacing:0.138px;">Layout orientation</span>
<span class="t" style="left:1028.00px;top:351px;font-size:13.1px;font-weight:400;-webkit-text-stroke:0.55px;color:#2a303a;letter-spacing:0.188px;">Auto</span>
<span class="t" style="left:1086.50px;top:351px;font-size:13.1px;font-weight:400;color:#52637c;letter-spacing:0.239px;">Horizontal</span>
<span class="t" style="left:1177.90px;top:351px;font-size:13.1px;font-weight:400;color:#52637c;letter-spacing:0.364px;">Vertical</span>
<span class="t" style="left:1010.60px;top:386px;font-size:11.25px;font-weight:400;-webkit-text-stroke:0.55px;color:#2a303a;letter-spacing:0.212px;">Text mode</span>
<span class="t" style="left:1010.60px;top:402px;font-size:11.25px;font-weight:400;color:#52637c;letter-spacing:0.119px;">Control if name and value is displayed or just name</span>
<span class="t" style="left:1018.80px;top:430px;font-size:13.1px;font-weight:400;color:#2a303a;letter-spacing:0.088px;">Auto</span>
<span class="t" style="left:1010.60px;top:465px;font-size:11.25px;font-weight:400;-webkit-text-stroke:0.55px;color:#2a303a;letter-spacing:0.072px;">Color mode</span>
<span class="t" style="left:1028.00px;top:493px;font-size:13.1px;font-weight:400;color:#52637c;letter-spacing:-0.004px;">None</span>
<span class="t" style="left:1090.20px;top:493px;font-size:13.1px;font-weight:400;-webkit-text-stroke:0.55px;color:#2a303a;letter-spacing:0.067px;">Value</span>
<span class="t" style="left:1153.90px;top:493px;font-size:13.1px;font-weight:400;color:#52637c;letter-spacing:0.057px;">Background</span>
<span class="t" style="left:1010.60px;top:528px;font-size:11.25px;font-weight:400;-webkit-text-stroke:0.55px;color:#2a303a;letter-spacing:-0.027px;">Graph mode</span>
<span class="t" style="left:1010.60px;top:544px;font-size:11.25px;font-weight:400;color:#52637c;letter-spacing:0.127px;">Stat panel graph / sparkline mode</span>
<span class="t" style="left:1028.00px;top:572px;font-size:13.1px;font-weight:400;color:#52637c;letter-spacing:-0.004px;">None</span>
<span class="t" style="left:1090.20px;top:572px;font-size:13.1px;font-weight:400;-webkit-text-stroke:0.55px;color:#2a303a;letter-spacing:-0.224px;">Area</span>
<span class="t" style="left:1010.60px;top:607px;font-size:11.25px;font-weight:400;-webkit-text-stroke:0.55px;color:#2a303a;letter-spacing:0.258px;">Text alignment</span>
<span class="t" style="left:1028.00px;top:635px;font-size:13.1px;font-weight:400;-webkit-text-stroke:0.55px;color:#2a303a;letter-spacing:0.188px;">Auto</span>
<span class="t" style="left:1086.50px;top:635px;font-size:13.1px;font-weight:400;color:#52637c;letter-spacing:-0.163px;">Center</span>
<span class="t" style="left:1010.60px;top:690px;font-size:13.1px;font-weight:400;-webkit-text-stroke:0.55px;color:#2a303a;letter-spacing:0.145px;">Text size</span>
<span class="t" style="left:1010.60px;top:726px;font-size:13.1px;font-weight:400;-webkit-text-stroke:0.55px;color:#2a303a;letter-spacing:0.159px;">Standard options</span>
<span class="t" style="left:1010.60px;top:760px;font-size:13.1px;font-weight:400;-webkit-text-stroke:0.55px;color:#2a303a;letter-spacing:0.135px;">Thresholds</span>
<span class="t" style="left:1095.87px;top:760px;font-size:11.25px;font-weight:400;-webkit-text-stroke:0.55px;color:#52637c;letter-spacing:0.000px;">2</span>
</body></html>
